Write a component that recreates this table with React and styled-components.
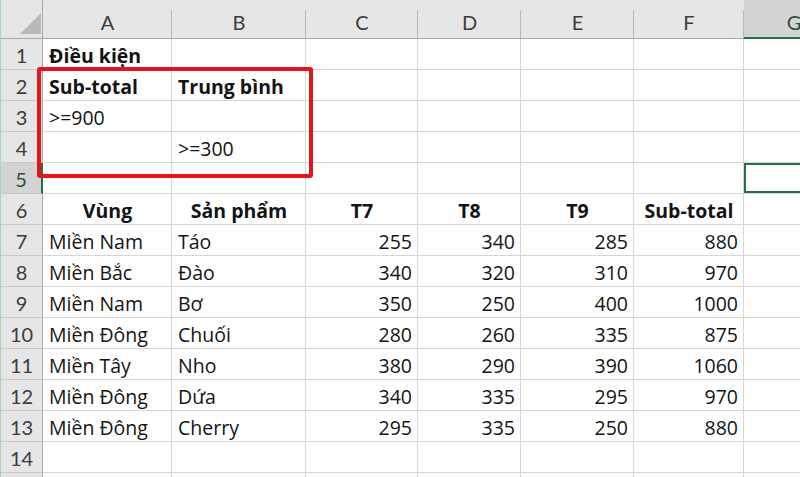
import React from "react";
import styled, { createGlobalStyle } from "styled-components";

const GlobalStyle = createGlobalStyle`
  html, body {
    margin: 0;
    padding: 0;
    background: #ffffff;
    overflow: hidden;
  }
  body {
    font-family: "Open Sans", Lato, "Noto Sans", sans-serif;
  }
`;

const EXCEL_GREEN = "#217346";
const GRID = "#d6d6d6";

const COLUMNS = ["A", "B", "C", "D", "E", "F", "G"];
const SELECTED_COL = "G";
const SELECTED_ROW = 5;
const VISIBLE_ROW_NUMBERS = 14;

// each row: array of [text, options]
const ROWS = [
  [["Điều kiện", { bold: true }]],
  [["Sub-total", { bold: true }], ["Trung bình", { bold: true }]],
  [[">=900"]],
  [[""], [">=300"]],
  [],
  [
    ["Vùng", { bold: true, align: "center" }],
    ["Sản phẩm", { bold: true, align: "center" }],
    ["T7", { bold: true, align: "center" }],
    ["T8", { bold: true, align: "center" }],
    ["T9", { bold: true, align: "center" }],
    ["Sub-total", { bold: true, align: "center" }]
  ],
  ["Miền Nam", "Táo", 255, 340, 285, 880],
  ["Miền Bắc", "Đào", 340, 320, 310, 970],
  ["Miền Nam", "Bơ", 350, 250, 400, 1000],
  ["Miền Đông", "Chuối", 280, 260, 335, 875],
  ["Miền Tây", "Nho", 380, 290, 390, 1060],
  ["Miền Đông", "Dứa", 340, 335, 295, 970],
  ["Miền Đông", "Cherry", 295, 335, 250, 880],
  [],
  []
];

const Frame = styled.div`
  position: relative;
  width: 800px;
  height: 477px;
  overflow: hidden;
  background: #ffffff;
  border-left: 1px solid #a9d3b9;
  box-sizing: border-box;
`;

const Sheet = styled.div`
  display: grid;
  grid-template-columns: 42px 129px 134px 112px 103px 113px 110px 100px;
  grid-template-rows: 39px repeat(15, 31px);
`;

const Corner = styled.div`
  position: relative;
  background: #e6e6e6;
  border-right: 1px solid #a8a8a8;
  border-bottom: 1px solid #a8a8a8;
  box-sizing: border-box;
  display: flex;
  align-items: flex-end;
  justify-content: flex-end;
  padding: 0 1px 4px 0;

  &::before {
    content: "";
    width: 0;
    height: 0;
    border-left: 21px solid transparent;
    border-bottom: 21px solid #b9b9b9;
  }
`;

const ColHeader = styled.div`
  position: relative;
  background: ${(p) => (p.$selected ? "#d3d3d3" : "#e6e6e6")};
  border-bottom: ${(p) =>
    p.$selected ? `2px solid ${EXCEL_GREEN}` : "1px solid #a8a8a8"};
  box-sizing: border-box;
  display: flex;
  align-items: flex-end;
  justify-content: center;
  padding-bottom: ${(p) => (p.$selected ? "3px" : "4px")};
  font-family: Lato, "Open Sans", sans-serif;
  font-size: 20px;
  color: ${(p) => (p.$selected ? "#2c4f3c" : "#3c3c3c")};

  &::after {
    content: "";
    position: absolute;
    right: 0;
    top: 10px;
    bottom: 0;
    width: 1px;
    background: #b8b8b8;
  }
`;

const RowHeader = styled.div`
  background: ${(p) => (p.$selected ? "#d3d3d3" : "#e6e6e6")};
  border-right: ${(p) =>
    p.$selected ? `2px solid ${EXCEL_GREEN}` : "1px solid #a8a8a8"};
  border-bottom: 1px solid #c9c9c9;
  box-sizing: border-box;
  display: flex;
  align-items: center;
  justify-content: center;
  padding-top: 2px;
  font-family: Lato, "Open Sans", sans-serif;
  font-size: 20px;
  color: ${(p) => (p.$selected ? "#2c4f3c" : "#3c3c3c")};
`;

const Cell = styled.div`
  border-right: 1px solid ${GRID};
  border-bottom: 1px solid ${GRID};
  box-sizing: border-box;
  display: flex;
  align-items: center;
  justify-content: ${(p) =>
    p.$align === "right"
      ? "flex-end"
      : p.$align === "center"
      ? "center"
      : "flex-start"};
  padding: 2px 5px 0 6px;
  font-size: 19.5px;
  font-weight: ${(p) => (p.$bold ? 700 : 400)};
  color: #141414;
  white-space: nowrap;
  box-shadow: ${(p) =>
    p.$selected ? `inset 0 0 0 2px ${EXCEL_GREEN}` : "none"};
`;

const Highlight = styled.div`
  position: absolute;
  left: 36px;
  top: 67px;
  width: 276px;
  height: 111px;
  border: 4px solid #e3141c;
  border-radius: 3px;
  box-sizing: border-box;
  pointer-events: none;
`;

function cellFor(row, colIndex) {
  const raw = row[colIndex];
  if (raw === undefined) return { text: "", opts: {} };
  if (Array.isArray(raw)) return { text: raw[0], opts: raw[1] || {} };
  if (typeof raw === "number") return { text: String(raw), opts: { align: "right" } };
  return { text: raw, opts: {} };
}

export default function App() {
  return (
    <>
      <GlobalStyle />
      <Frame>
        <Sheet>
          <Corner />
          {COLUMNS.map((c) => (
            <ColHeader key={c} $selected={c === SELECTED_COL}>
              {c}
            </ColHeader>
          ))}
          {ROWS.map((row, r) => {
            const rowNum = r + 1;
            return (
              <React.Fragment key={rowNum}>
                <RowHeader $selected={rowNum === SELECTED_ROW}>
                  {rowNum <= VISIBLE_ROW_NUMBERS ? rowNum : ""}
                </RowHeader>
                {COLUMNS.map((c, ci) => {
                  const { text, opts } = cellFor(row, ci);
                  return (
                    <Cell
                      key={c}
                      $bold={opts.bold}
                      $align={opts.align}
                      $selected={c === SELECTED_COL && rowNum === SELECTED_ROW}
                    >
                      {text}
                    </Cell>
                  );
                })}
              </React.Fragment>
            );
          })}
        </Sheet>
        <Highlight />
      </Frame>
    </>
  );
}
